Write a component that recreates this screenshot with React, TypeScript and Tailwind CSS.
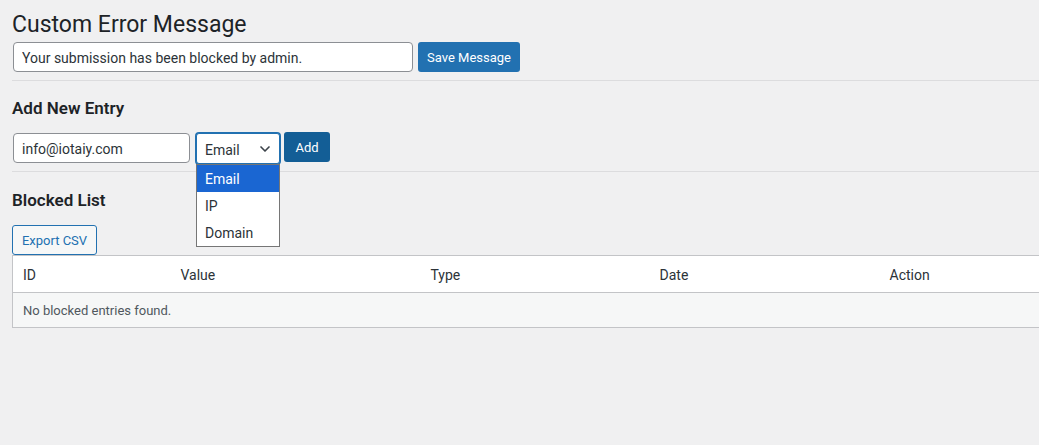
import React, { useState } from "react";
import { ChevronDown } from "lucide-react";

const font = "font-['Segoe_UI',Roboto,'Noto_Sans',sans-serif]";

export default function App() {
  const [message, setMessage] = useState("Your submission has been blocked by admin.");
  const [entry, setEntry] = useState("info@iotaiy.com");
  const [type] = useState("Email");
  const options = ["Email", "IP", "Domain"];

  return (
    <div className={`min-h-screen w-full overflow-hidden bg-[#f0f0f1] text-[#3c434a] ${font}`}>
      <div className="w-[1080px] pl-3">
        {/* Custom Error Message */}
        <h1 className="pt-[10px] text-[23px] font-normal leading-[30px] text-[#1d2327]">
          Custom Error Message
        </h1>
        <div className="mt-[2px] flex items-center">
          <input
            type="text"
            value={message}
            onChange={(e) => setMessage(e.target.value)}
            className="ml-px h-[30px] w-[400px] rounded-[4px] border border-[#8c8f94] bg-white px-2 pt-px text-[14px] text-[#2c3338] outline-none"
          />
          <button className="ml-[5px] h-[30px] w-[102px] rounded-[3px] bg-[#2271b1] pt-px text-[13px] text-white">
            Save Message
          </button>
        </div>
        <div className="mt-[8px] border-t border-[#dcdcde]" />

        {/* Add New Entry */}
        <h2 className="mt-[16px] text-[17px] font-semibold leading-[22px] text-[#1d2327]">
          Add New Entry
        </h2>
        <div className="mt-[13px] flex items-start">
          <input
            type="text"
            value={entry}
            onChange={(e) => setEntry(e.target.value)}
            className="ml-px mt-px h-[30px] w-[177px] rounded-[4px] border border-[#8c8f94] bg-white px-2 pt-px text-[14px] text-[#2c3338] outline-none"
          />
          <div className="relative ml-[6px] mt-[1px]">
            <div className="flex h-[31px] w-[84px] items-center justify-between rounded-[3px] border border-[#2271b1] bg-white pl-2 pr-[6px] text-[14px] text-[#2c3338] shadow-[0_0_0_1px_#2271b1]">
              <span className="pt-[3px]">{type}</span>
              <ChevronDown className="h-4 w-4 text-[#3c434a]" strokeWidth={2.5} />
            </div>
            <ul className="absolute left-0 top-[31px] z-10 w-[84px] border border-[#767676] bg-white text-[14px] text-[#2c3338]">
              {options.map((o) => (
                <li
                  key={o}
                  className={`flex h-[27px] items-center pl-2 pt-[2px] ${
                    o === type ? "bg-[#1a66d2] text-white" : ""
                  }`}
                >
                  {o}
                </li>
              ))}
            </ul>
          </div>
          <button className="ml-[4px] h-[30px] w-[46px] rounded-[3px] bg-[#135e96] pt-px text-[13px] text-white">
            Add
          </button>
        </div>
        <div className="mt-[7px] border-t border-[#dcdcde]" />

        {/* Blocked List */}
        <h2 className="mt-[17px] text-[17px] font-semibold leading-[22px] text-[#1d2327]">
          Blocked List
        </h2>
        <button className="mt-[14px] h-[30px] w-[85px] rounded-[3px] border border-[#2271b1] bg-[#f6f7f7] pt-px text-[13px] text-[#2271b1]">
          Export CSV
        </button>
        <table className="w-[1060px] border-collapse border border-[#c3c4c7] text-left">
          <thead>
            <tr className="h-[37px] border-b border-[#c3c4c7] bg-white text-[14px] text-[#2c3338]">
              <th className="w-[158px] pl-[10px] pt-[2px] font-normal">ID</th>
              <th className="w-[250px] pl-[10px] pt-[2px] font-normal">Value</th>
              <th className="w-[229px] pl-[10px] pt-[2px] font-normal">Type</th>
              <th className="w-[230px] pl-[10px] pt-[2px] font-normal">Date</th>
              <th className="pl-[10px] pt-[2px] font-normal">Action</th>
            </tr>
          </thead>
          <tbody>
            <tr className="h-[35px] bg-[#f6f7f7]">
              <td colSpan={5} className="pl-[10px] pt-[2px] text-[13px] text-[#50575e]">
                No blocked entries found.
              </td>
            </tr>
          </tbody>
        </table>
      </div>
    </div>
  );
}
